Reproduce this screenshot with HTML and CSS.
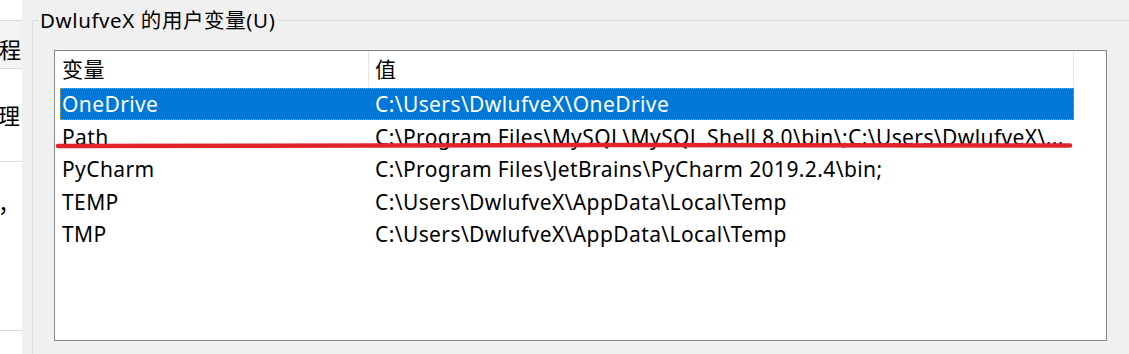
FILE: index.html
```html
<!DOCTYPE html>
<html lang="zh-CN">
<head>
    <meta charset="UTF-8">
    <title>环境变量</title>
    <link rel="stylesheet" href="styles.css">
</head>
<body>
    <div class="side">
        <div class="side-head"></div>
        <div class="side-tab"><span>程</span></div>
        <div class="side-item side-item-first"><span>理</span></div>
        <div class="side-item side-item-second"><span>，</span></div>
        <div class="side-foot"></div>
    </div>

    <div class="main">
        <fieldset class="group">
            <legend class="group-label">DwlufveX 的用户变量(U)</legend>

            <div class="listview">
                <div class="list-header">
                    <div class="col-name">变量</div>
                    <div class="col-value">值</div>
                    <div class="col-rest"></div>
                </div>

                <div class="list-body">
                    <div class="list-row selected">
                        <div class="cell-name">OneDrive</div>
                        <div class="cell-value">C:\Users\DwlufveX\OneDrive</div>
                    </div>
                    <div class="list-row">
                        <div class="cell-name">Path</div>
                        <div class="cell-value">C:\Program Files\MySQL\MySQL Shell 8.0\bin\;C:\Users\DwlufveX\...</div>
                    </div>
                    <div class="list-row">
                        <div class="cell-name">PyCharm</div>
                        <div class="cell-value">C:\Program Files\JetBrains\PyCharm 2019.2.4\bin;</div>
                    </div>
                    <div class="list-row">
                        <div class="cell-name">TEMP</div>
                        <div class="cell-value">C:\Users\DwlufveX\AppData\Local\Temp</div>
                    </div>
                    <div class="list-row">
                        <div class="cell-name">TMP</div>
                        <div class="cell-value">C:\Users\DwlufveX\AppData\Local\Temp</div>
                    </div>
                </div>

                <!-- hand drawn red mark under Path -->
                <svg class="mark" width="1053" height="10" viewBox="0 0 1053 10">
                    <path d="M3 6 C 300 5.2, 700 4.6, 1015 5.6" stroke="#e3232c" stroke-width="4.5" stroke-linecap="round" fill="none"/>
                </svg>
            </div>
        </fieldset>
    </div>
</body>
</html>
```

FILE: styles.css
```css
/* Page */
body {
    margin: 0;
    height: 354px;
    overflow: hidden;
    display: flex;
    background-color: #f0f0f0;
    font-family: 'Noto Sans', 'Noto Sans CJK SC', sans-serif;
    font-size: 21px;
    letter-spacing: 0.4px;
    color: #000;
}

/* Left strip (cut off part of the window behind) */
.side {
    width: 22px;
    flex-shrink: 0;
    display: flex;
    flex-direction: column;
    background-color: #fff;
    overflow: hidden;
    white-space: nowrap;
    font-size: 22px;
    letter-spacing: 0;
}

.side-head {
    height: 20px;
    border-bottom: 1px solid #d9d9d9;
}

.side-tab {
    height: 48px;
    box-sizing: border-box;
    padding-top: 16px;
    line-height: 24px;
    background-color: #f3f3f3;
    border-bottom: 1px solid #d9d9d9;
    margin-left: -1px;
}

.side-item {
    line-height: 24px;
    margin-left: -2px;
}

.side-item-first {
    height: 93px;
    padding-top: 34px;
    box-sizing: border-box;
    border-bottom: 1px solid #d9d9d9;
}

.side-item-second {
    height: 169px;
    padding-top: 29px;
    box-sizing: border-box;
    border-bottom: 1px solid #d9d9d9;
}

.side-foot {
    flex: 1;
}

/* Group box */
.main {
    flex: 1;
    display: flex;
    flex-direction: column;
    padding-left: 10px;
}

.group {
    flex: 1;
    min-height: 0;
    margin: 8px 0 0 0;
    padding: 0;
    border: none;
    border-top: 1px solid #dcdcdc;
    border-left: 1px solid #dcdcdc;
}

.group-label {
    margin-left: 5px;
    padding: 0 2px;
    font-size: 20.5px;
    letter-spacing: 0.6px;
    line-height: 24px;
}

/* List view */
.listview {
    position: relative;
    margin: 18px 0 0 21px;
    width: 1053px;
    height: 291px;
    box-sizing: border-box;
    border: 1px solid #828790;
    background-color: #fff;
}

.list-header {
    display: flex;
    height: 36px;
    line-height: 36px;
}

.col-name {
    width: 314px;
    padding-left: 7px;
    box-sizing: border-box;
    border-right: 1px solid #e5e5e5;
}

.col-value {
    width: 705px;
    padding-left: 6px;
    box-sizing: border-box;
    border-right: 1px solid #e5e5e5;
}

.col-rest {
    flex: 1;
}

.list-body {
    padding: 1px 0 0 5px;
}

.list-row {
    display: flex;
    width: 1014px;
    height: 32.5px;
    line-height: 30px;
    box-sizing: border-box;
    border: 1px solid transparent;
    white-space: nowrap;
}

.list-row.selected {
    background-color: #0078d7;
    color: #fff;
    border: 1px dotted #e8932c;
    height: 32px;
    margin-bottom: 0.5px;
}

.cell-name {
    width: 308px;
    padding-left: 1px;
    box-sizing: border-box;
}

.cell-value {
    flex: 1;
    padding-left: 6px;
    overflow: hidden;
}

/* Red marker line */
.mark {
    position: absolute;
    left: 0;
    top: 89px;
}
```
